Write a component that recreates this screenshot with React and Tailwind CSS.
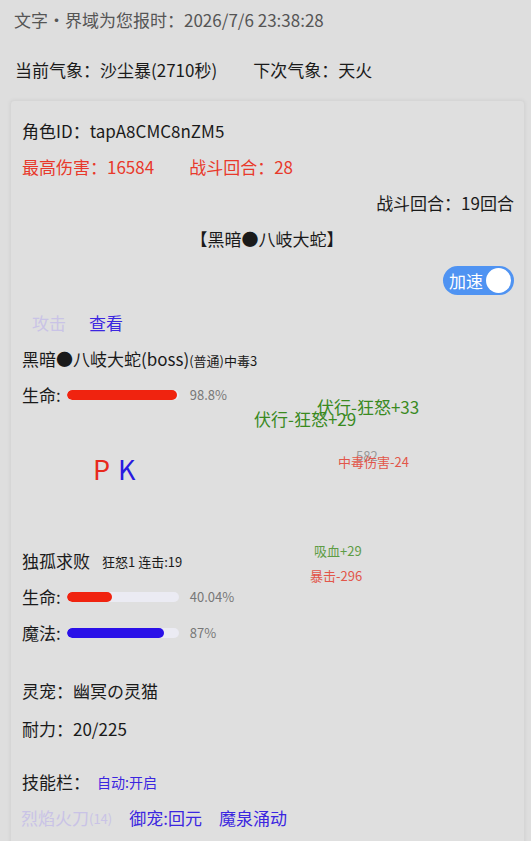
import React from 'react';

function Bar({ pct, color }) {
  return (
    <div className="w-[112px] h-[10px] rounded-full bg-[#ebebf3] overflow-hidden">
      <div className={`h-full rounded-full ${color}`} style={{ width: `${pct}%` }} />
    </div>
  );
}

export default function App() {
  return (
    <div
      className="min-h-screen bg-[#dedede] text-[17px] text-[#1a1a1a] overflow-hidden"
      style={{ fontFamily: '"Noto Sans CJK SC", "Noto Sans", sans-serif' }}
    >
      {/* header */}
      <div className="pl-[14px] pt-[8px] h-[32px] leading-[24px] text-[#555]">
        文字・界域为您报时：2026/7/6 23:38:28
      </div>
      <div className="pl-[15px] mt-[26px] h-[24px] leading-[24px] flex">
        <span>当前气象：沙尘暴(2710秒)</span>
        <span className="ml-[36px]">下次气象：天火</span>
      </div>

      {/* battle card */}
      <div className="relative ml-[10px] mr-[6px] mt-[18px] pt-[12px] pl-[11px] pr-[10px] pb-[10px] bg-[#dfdfdf] border border-[#d6d6d6] rounded-sm shadow-[0_0_4px_rgba(0,0,0,0.06)]">
        <div className="h-[36px] flex items-center">角色ID：tapA8CMC8nZM5</div>
        <div className="h-[36px] flex items-center text-[#e8392b]">
          <span>最高伤害：16584</span>
          <span className="ml-[35px]">战斗回合：28</span>
        </div>
        <div className="h-[36px] flex items-center justify-end">战斗回合：19回合</div>
        <div className="h-[36px] flex items-center justify-center pr-[2px]">【黑暗●八岐大蛇】</div>

        <div className="mt-[9px] flex justify-end">
          <div className="w-[71px] h-[29px] rounded-full bg-[#4f93f2] flex items-center pl-[6px] pr-[3px] justify-between">
            <span className="text-white text-[17px] leading-none">加速</span>
            <span className="w-[25px] h-[25px] rounded-full bg-white" />
          </div>
        </div>

        <div className="mt-[10px] h-[36px] flex items-center pl-[10px]">
          <span className="text-[#c9c3e6]">攻击</span>
          <span className="ml-[23px] text-[#3b26e0]">查看</span>
        </div>
        <div className="h-[36px] flex items-center">
          <span>黑暗●八岐大蛇(boss)</span>
          <span className="text-[13px] mt-[3px]">(普通)中毒3</span>
        </div>
        <div className="h-[36px] flex items-center">
          <span>生命:</span>
          <span className="ml-[6px]"><Bar pct={98.8} color="bg-[#f0230f]" /></span>
          <span className="ml-[11px] text-[13px] text-[#777]">98.8%</span>
        </div>

        <div className="mt-[37px] h-[36px] flex items-center pl-[71px] text-[27px] leading-none">
          <span className="text-[#e8291c]">P</span>
          <span className="ml-[8px] text-[#2a1ae0]">K</span>
        </div>

        <div className="mt-[57px] h-[36px] flex items-center">
          <span>独孤求败</span>
          <span className="ml-[12px] text-[13px] mt-[2px]">狂怒1 连击:19</span>
        </div>
        <div className="h-[36px] flex items-center">
          <span>生命:</span>
          <span className="ml-[6px]"><Bar pct={40.04} color="bg-[#f0230f]" /></span>
          <span className="ml-[11px] text-[13px] text-[#777]">40.04%</span>
        </div>
        <div className="h-[36px] flex items-center">
          <span>魔法:</span>
          <span className="ml-[6px]"><Bar pct={87} color="bg-[#2a10e8]" /></span>
          <span className="ml-[11px] text-[13px] text-[#777]">87%</span>
        </div>

        <div className="mt-[22px] h-[36px] flex items-center">灵宠：幽冥の灵猫</div>
        <div className="mt-[2px] h-[36px] flex items-center">耐力：20/225</div>

        <div className="mt-[17px] h-[36px] flex items-center">
          <span>技能栏：</span>
          <span className="ml-[7px] text-[14px] text-[#3b26e0]">自动:开启</span>
        </div>
        <div className="h-[36px] flex items-center -ml-[1px]">
          <span className="text-[#c9c3e6]">烈焰火刀</span>
          <span className="text-[13px] text-[#c9c3e6] mt-[2px]">(14)</span>
          <span className="ml-[17px] text-[#3b26e0]">御宠:回元</span>
          <span className="ml-[17px] text-[#3b26e0]">魔泉涌动</span>
        </div>

        {/* floating combat text */}
        <div className="absolute left-[306px] top-[294px] text-[17px] leading-[24px] text-[#3a8a1f]">伏行-狂怒+33</div>
        <div className="absolute left-[243px] top-[306px] text-[17px] leading-[24px] text-[#3a8a1f]">伏行-狂怒+29</div>
        <div className="absolute left-[345px] top-[346px] text-[13px] leading-[18px] text-[#999]">582</div>
        <div className="absolute left-[327px] top-[352px] text-[13px] leading-[18px] text-[#e2564a]">中毒伤害-24</div>
        <div className="absolute left-[303px] top-[441px] text-[13px] leading-[18px] text-[#5e9c45]">吸血+29</div>
        <div className="absolute left-[299px] top-[466px] text-[13px] leading-[18px] text-[#e2564a]">暴击-296</div>
      </div>
    </div>
  );
}
